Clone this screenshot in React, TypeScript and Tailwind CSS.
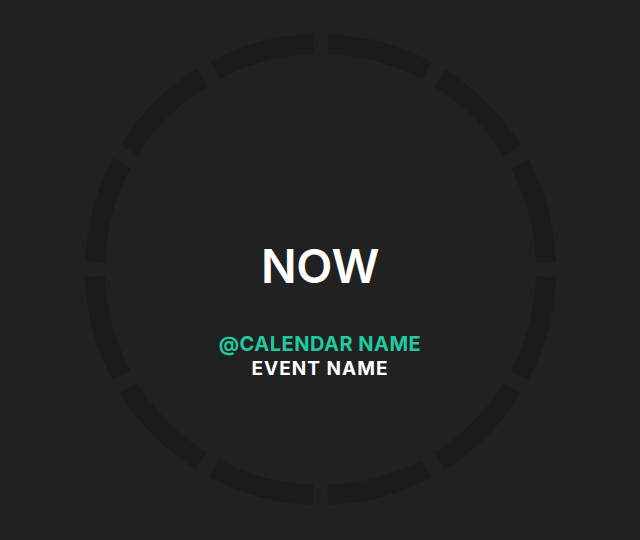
import React from "react";

const SEGMENTS = 12;
const RADIUS = 225.5;
const GAP = 15;

function Ring() {
  const circumference = 2 * Math.PI * RADIUS;
  const step = circumference / SEGMENTS;
  const dash = step - GAP;
  // start the pattern mid-gap so gaps sit on the hour marks
  const offset = dash + GAP / 2;
  return (
    <svg width="640" height="540" viewBox="0 0 640 540" className="block">
      <circle
        cx="320.5"
        cy="269.5"
        r={RADIUS}
        fill="none"
        stroke="#1b1b1b"
        strokeWidth="20"
        strokeDasharray={`${dash} ${GAP}`}
        strokeDashoffset={offset}
      />
    </svg>
  );
}

export default function App() {
  return (
    <div className="relative w-[640px] h-[540px] overflow-hidden bg-[#212121] font-['Inter',sans-serif]">
      <div className="absolute inset-0">
        <Ring />
      </div>
      <div className="relative flex h-full flex-col items-center pt-[236px]">
        <h1 className="text-[47px] leading-[60px] font-semibold text-white tracking-[-0.3px]">
          NOW
        </h1>
        <p className="mt-[36px] text-[20px] leading-6 font-bold text-[#21c9a1] tracking-[0.5px]">
          @CALENDAR NAME
        </p>
        <p className="mt-px text-[19px] leading-6 font-bold text-white tracking-[1px]">
          EVENT NAME
        </p>
      </div>
    </div>
  );
}
